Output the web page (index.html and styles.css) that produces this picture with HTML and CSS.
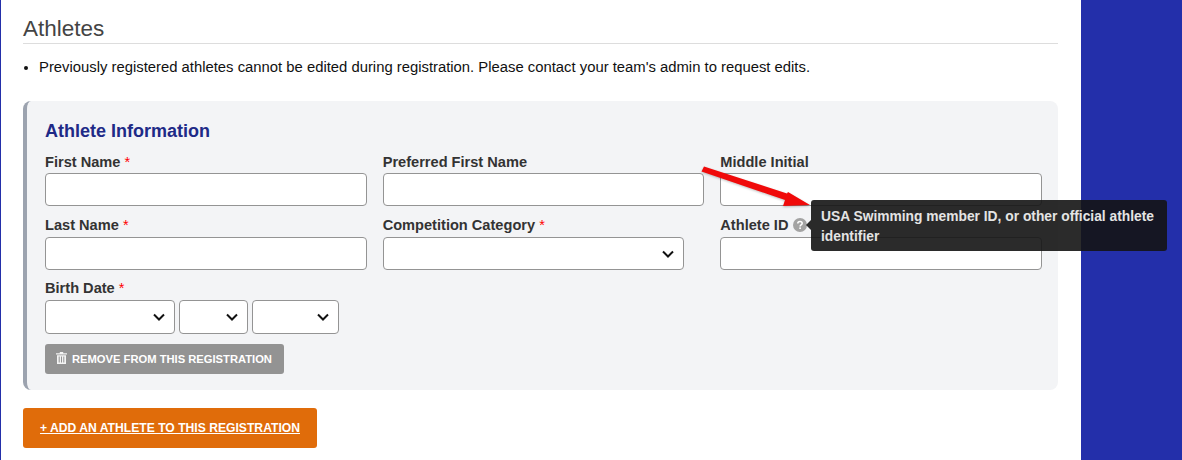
FILE: index.html
```html
<!DOCTYPE html>
<html lang="en">
<head>
    <meta charset="UTF-8">
    <meta name="viewport" content="width=device-width, initial-scale=1.0">
    <title>Athletes</title>
    <link rel="stylesheet" href="styles.css">
</head>
<body>

    <div class="page">
        <main class="content">
            <h2 class="section-title">Athletes</h2>

            <ul class="notes">
                <li>Previously registered athletes cannot be edited during registration. Please contact your team's admin to request edits.</li>
            </ul>

            <!-- Athlete card -->
            <section class="athlete-card">
                <h3 class="card-title">Athlete Information</h3>

                <div class="field-grid">
                    <div class="field">
                        <label for="first-name">First Name <span class="req">*</span></label>
                        <input type="text" id="first-name">
                    </div>
                    <div class="field">
                        <label for="preferred-name">Preferred First Name</label>
                        <input type="text" id="preferred-name">
                    </div>
                    <div class="field">
                        <label for="middle-initial">Middle Initial</label>
                        <input type="text" id="middle-initial">
                    </div>
                    <div class="field">
                        <label for="last-name">Last Name <span class="req">*</span></label>
                        <input type="text" id="last-name">
                    </div>
                    <div class="field">
                        <label for="category">Competition Category <span class="req">*</span></label>
                        <select id="category" class="select-category"><option></option></select>
                    </div>
                    <div class="field">
                        <label for="athlete-id">Athlete ID
                            <svg class="help-icon" viewBox="0 0 14 14" width="14" height="14">
                                <circle cx="7" cy="7" r="7" fill="#a3a3a3"/>
                                <path d="M4.8 5.4C4.8 4.1 5.8 3.4 7 3.4s2.2.7 2.2 1.9c0 1.7-2.1 1.6-2.1 3.1" fill="none" stroke="#fff" stroke-width="1.5"/>
                                <rect x="6.3" y="9.4" width="1.6" height="1.6" fill="#fff"/>
                            </svg>
                        </label>
                        <input type="text" id="athlete-id">
                    </div>
                </div>

                <div class="field birth-field">
                    <label for="birth-month">Birth Date <span class="req">*</span></label>
                    <div class="birth-selects">
                        <select id="birth-month" class="select-month"><option></option></select>
                        <select class="select-day"><option></option></select>
                        <select class="select-year"><option></option></select>
                    </div>
                </div>

                <button class="btn-remove">
                    <svg class="trash-icon" viewBox="0 0 11 12" width="11" height="12">
                        <path d="M3.8 1.2V0h3.4v1.2H11v1.3H0V1.2z" fill="#f4f4f4"/>
                        <path d="M1 3.3h9V12H1zM2.7 4.6v6h1v-6zm2.3 0v6h1v-6zm2.3 0v6h1v-6z" fill="#f4f4f4" fill-rule="evenodd"/>
                    </svg>
                    REMOVE FROM THIS REGISTRATION
                </button>
            </section>

            <a class="btn-add" href="#">+ ADD AN ATHLETE TO THIS REGISTRATION</a>
        </main>
        <div class="side-band"></div>
    </div>

    <!-- Annotation arrow -->
    <svg class="arrow" viewBox="0 0 120 50" width="120" height="50">
        <path d="M4 0.5 L87 27.5 L88 26 L110 39 L83 40 L85 34 L1.5 5.5 Z" fill="#f00a0a"/>
    </svg>

    <!-- Tooltip -->
    <div class="tooltip">USA Swimming member ID, or other official athlete identifier</div>

</body>
</html>
```

FILE: styles.css
```css
/* Global Styles */
html, body {
    margin: 0;
    padding: 0;
    height: 100%;
    overflow: hidden;
    font-family: "Liberation Sans", Arial, sans-serif;
    background: #fff;
}

.page {
    display: flex;
    height: 460px;
    border-left: 1px solid #232faa;
}

.content {
    width: 1080px;
    padding: 0 23px 0 22px;
    box-sizing: border-box;
}

.side-band {
    flex: 1;
    background: #232faa;
}

/* Heading */
.section-title {
    margin: 15px 0 0;
    padding-bottom: 1px;
    font-size: 22.5px;
    line-height: 27px;
    font-weight: 400;
    color: #444;
    border-bottom: 1px solid #ddd;
}

.notes {
    margin: 13px 0 0;
    padding: 0 0 0 16px;
    font-size: 14.83px;
    line-height: 20px;
    color: #111;
}

/* Athlete card */
.athlete-card {
    margin-top: 24px;
    height: 289px;
    box-sizing: border-box;
    padding: 18px 16px 0 18px;
    background: #f3f4f6;
    border-left: 4px solid #9ca3af;
    border-radius: 8px;
}

.card-title {
    margin: 0;
    font-size: 18px;
    line-height: 24px;
    font-weight: 700;
    color: #1e2a87;
}

.field-grid {
    display: grid;
    grid-template-columns: repeat(3, 1fr);
    column-gap: 16px;
    row-gap: 9px;
    margin-top: 8px;
}

.field label {
    display: block;
    height: 22px;
    box-sizing: border-box;
    font-size: 14.6px;
    line-height: 20px;
    font-weight: 700;
    color: #333;
}

/* first row sits a pixel closer to its inputs */
.field:nth-child(-n+3) label {
    padding-top: 1px;
}

.req {
    color: #f00;
    font-weight: 400;
}

.help-icon {
    vertical-align: -2px;
}

.field input, .field select {
    display: block;
    width: 100%;
    height: 33px;
    box-sizing: border-box;
    background-color: #fff;
    border: 1px solid #949494;
    border-radius: 4px;
    margin: 0;
    padding: 0;
}

.field select {
    appearance: none;
    background-image: url("data:image/svg+xml,%3Csvg xmlns='http://www.w3.org/2000/svg' width='12' height='8'%3E%3Cpath d='M1 1.5l5 5 5-5' fill='none' stroke='%23111' stroke-width='2'/%3E%3C/svg%3E");
    background-repeat: no-repeat;
    background-position: right 9px center;
}

.field .select-category {
    width: 301px;
}

.birth-field {
    margin-top: 8px;
}

.birth-field.field label {
    padding-top: 0;
}

.birth-selects {
    display: flex;
    gap: 4px;
}

.field .birth-selects select {
    height: 34px;
}

.field .select-month { width: 130px; }
.field .select-day { width: 69px; }
.field .select-year { width: 87px; }

/* Buttons */
.btn-remove {
    display: flex;
    align-items: center;
    gap: 5px;
    width: 239px;
    height: 30px;
    margin-top: 10px;
    padding: 0 0 0 11px;
    box-sizing: border-box;
    border: 0;
    border-radius: 3px;
    background: #939393;
    color: #fff;
    font-family: inherit;
    font-size: 11.2px;
    font-weight: 700;
}

.trash-icon {
    margin-top: -2px;
}

.btn-add {
    display: block;
    width: 294px;
    height: 40px;
    box-sizing: border-box;
    margin-top: 18px;
    border-radius: 3px;
    background: #e06c0a;
    color: #fff;
    font-size: 12.15px;
    font-weight: 700;
    line-height: 40px;
    text-align: center;
}

/* Overlays */
.arrow {
    position: absolute;
    left: 700px;
    top: 166px;
    filter: drop-shadow(0 1px 1px rgba(0, 0, 0, 0.25));
}

.tooltip {
    position: absolute;
    left: 811px;
    top: 200px;
    width: 356px;
    height: 51px;
    box-sizing: border-box;
    padding: 7px 10px;
    background: rgba(20, 20, 20, 0.9);
    border-radius: 3px;
    color: #e4e4e4;
    font-size: 13.8px;
    line-height: 20px;
    font-weight: 700;
}

.tooltip::before {
    content: '';
    position: absolute;
    left: -5px;
    top: 20px;
    border-top: 5px solid transparent;
    border-bottom: 5px solid transparent;
    border-right: 5px solid rgba(20, 20, 20, 0.9);
}
```
